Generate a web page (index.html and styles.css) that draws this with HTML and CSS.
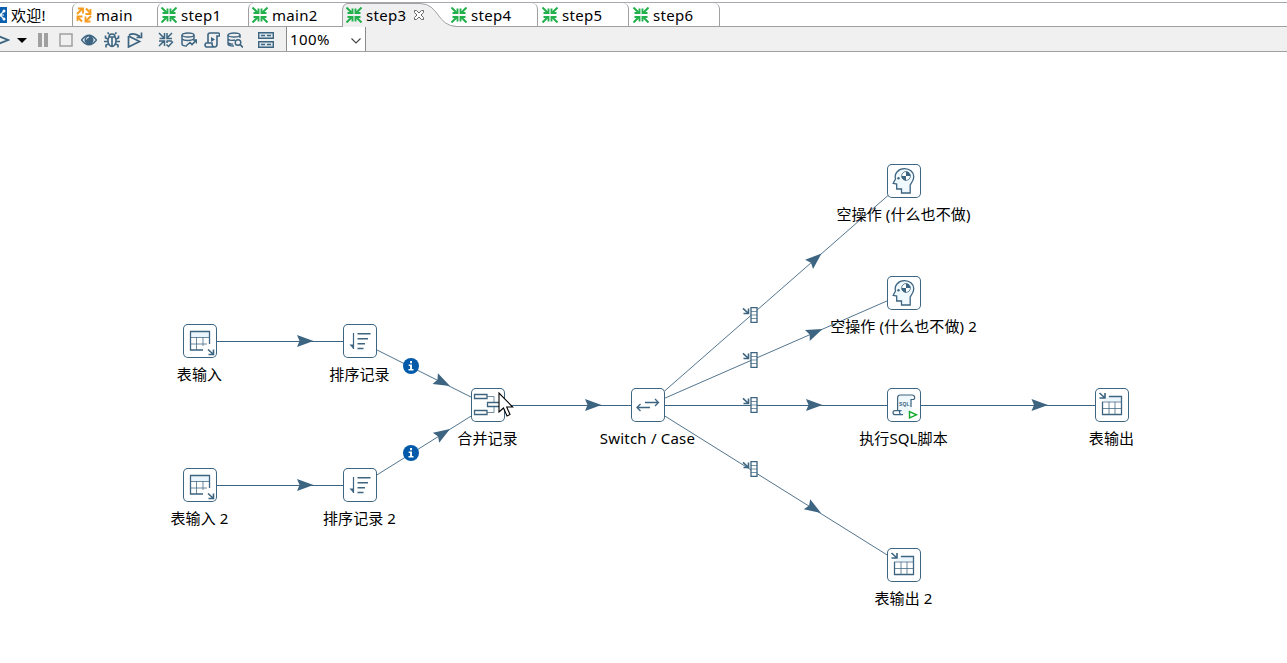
FILE: index.html
```html
<!DOCTYPE html>
<html lang="zh">
<head>
  <meta charset="UTF-8">
  <title>step3</title>
  <link rel="stylesheet" href="styles.css">
</head>
<body>
<svg class="defs" aria-hidden="true">
  <symbol id="transform" viewBox="0 0 16 16">
    <path d="M.5.5l5 5M15.500.5l-5 5M.5 15.500l5-5M15.500 15.500l-5-5" stroke-width="2"/>
    <path d="M1.500 6h5V1.500M14.500 6h-5V1.500M1.500 10h5v4.500M14.500 10h-5v4.500" stroke-width="1.900"/>
  </symbol>
  <symbol id="job" viewBox="0 0 16 16">
    <path d="M1 7l5-5M10 1.500l4.500 4.500M15 9l-5 5M6 14.500L1.500 10" stroke-width="2"/>
    <path d="M2 1.500h5v5M14.500 2v5h-5M9.500 9.500v5h5M1.500 14V9.500h5" stroke-width="1.800"/>
  </symbol>
  <symbol id="table-input" viewBox="0 0 34 34">
    <path d="M7.500 7.500h19v6h-19z" fill="#eaf6fc" stroke="none"/>
    <path d="M13.500 13v13M20 13v9M7 20h17M7 13.500h19" stroke-width="1" opacity=".75"/>
    <path d="M26.500 20V7.500h-19v18.500H20" stroke-width="1.300"/>
    <path d="M25 25.500l5 4.500M30.500 25.500v5h-5" stroke-width="1.600"/>
  </symbol>
  <symbol id="table-output" viewBox="0 0 34 34">
    <path d="M8 13.500l5.500-5.500h13v5.500z" fill="#eaf6fc" stroke="none"/>
    <path d="M14 14v12M20 14v12M7 20.500h19M7 14h19" stroke-width="1" opacity=".75"/>
    <path d="M14 8.500h12.500v18h-19V14" stroke-width="1.300"/>
    <path d="M4.500 5l5 4.500M10 5v5H4.500" stroke-width="1.600"/>
  </symbol>
  <symbol id="sort" viewBox="0 0 34 34">
    <path d="M10.500 9v16" stroke-width="1.200"/>
    <path d="M6.500 20.500h4V25z" fill="#3d6480" stroke="none"/>
    <path d="M14.500 9.700h13M14.500 14.700h10.500M14.500 19.700h7.500M14.500 24.500h6" stroke-width="1.400"/>
  </symbol>
  <symbol id="merge" viewBox="0 0 34 34">
    <path d="M16 8.500h7v16h-7" stroke-width="1" opacity=".7"/>
    <path d="M3.500 6.500h12.500v4H3.500zM3.500 22.500h12.500v4H3.500zM16.500 14.500h13v4h-13z" stroke-width="1.300" fill="#fff"/>
  </symbol>
  <symbol id="switch" viewBox="0 0 34 34">
    <path d="M14 14.500h13M24 11l3.500 3.500L24 18M19 19.500H6.500M9.500 16L6 19.500 9.500 23" stroke-width="1.300"/>
  </symbol>
  <symbol id="dummy" viewBox="0 0 34 34">
    <path d="M14.500 29v-4H9.700v-5l-3.500-.7L8.500 15C7 9.500 11.500 4.700 17.500 4.700c5.500 0 9.300 3.600 9.300 8 0 3.700-1.500 5.300-3.600 8.300v8z" fill="#eef8fd" stroke-width="1.300"/>
    <circle cx="19" cy="12" r="4.400" fill="#fff" stroke-width=".8"/>
    <path d="M19 12V7.600A4.400 4.400 0 0 1 23.400 12zM19 12v4.400A4.400 4.400 0 0 1 14.600 12z" fill="#3d6480" stroke="none"/>
    <circle cx="11.500" cy="14.300" r="1.200" fill="#3d6480" stroke="none"/>
  </symbol>
  <symbol id="sql" viewBox="0 0 34 34">
    <path d="M11 24V10c0-2 1-3 2.500-3H25v14l-4 5h-8z" fill="#eef8fd" stroke="none"/>
    <path d="M10.600 22.500V10c0-2 1-3 2.600-3H25c3.400 0 3.400 4.500 1 4.500h-2v7.500M14.500 22.700H8c-2.600 0-2.600 4 0 4h8M13 22.700c-1 1.300-.5 3 1 4" stroke-width="1.200"/>
    <text x="12" y="18" class="sql-text">SQL</text>
    <path d="M22.500 23.500v6.500l7-3.200z" fill="#fff" stroke="#12a92a" stroke-width="1.400"/>
  </symbol>
  <symbol id="arrow" viewBox="-16 -6 16 12" overflow="visible">
    <path d="M0 0L-16.500-6-14 0-16.500 6z" fill="#3d6480" stroke="none"/>
  </symbol>
  <symbol id="case" viewBox="0 0 16 16">
    <path d="M9 .7h6v14.600H9z" fill="#fff" stroke-width="1.300"/>
    <path d="M9 4.500h6M9 8h6M9 11.500h6" stroke-width="1" opacity=".7"/>
    <path d="M1 1.300l5 4.700M6.500 1.500v5H1.500" stroke-width="1.600"/>
  </symbol>
  <symbol id="info" viewBox="-8 -8 16 16">
    <circle r="8" fill="#005aa9" stroke="none"/>
    <path d="M-.9-5H1v2.200H-.9zM-2.300-1.600H1V3h1.500v1.600h-5V3h1.600V-.1h-1.400z" fill="#fff" stroke="none"/>
  </symbol>
</svg>

<nav class="tabs">
  <div class="tab welcome">
    <svg class="welcome-icon" viewBox="0 0 16 16"><path d="M0 0h16v16H0z" fill="#0a5fae"/><path d="M9 8l4-4M9 8h4M9 8l4 4" stroke="#fff" stroke-width="1.200"/><circle cx="13" cy="4" r="1.500" fill="#fff"/><circle cx="9" cy="8" r="1.500" fill="#fff"/><circle cx="13" cy="12" r="1.500" fill="#fff"/></svg>
    <span>欢迎!</span>
  </div>
  <div class="tab left main"><svg class="icon orange"><use href="#job"/></svg><span>main</span></div>
  <div class="tab left"><svg class="icon green"><use href="#transform"/></svg><span>step1</span></div>
  <div class="tab left main2"><svg class="icon green"><use href="#transform"/></svg><span>main2</span></div>
  <div class="tab active">
    <svg class="shape" viewBox="0 0 115 24"><path d="M.500 24V7Q1 .500 6 .500H78C97 .500 95 23.500 115 23.500V24z" fill="#f0f0f0"/><path d="M.500 24V7Q1 .500 6 .500H78C97 .500 95 23.500 115 23.500" stroke="#a0a0a0"/></svg>
    <svg class="icon green"><use href="#transform"/></svg><span>step3</span>
    <svg class="close" viewBox="0 0 12 12"><path d="M1.500 1.500h2L6 4l2.500-2.500h2v2L8 6l2.500 2.500v2h-2L6 8l-2.500 2.500h-2v-2L4 6 1.500 3.500z" fill="#fff" stroke="#666"/></svg>
  </div>
  <div class="tab right"><svg class="icon green"><use href="#transform"/></svg><span>step4</span></div>
  <div class="tab right"><svg class="icon green"><use href="#transform"/></svg><span>step5</span></div>
  <div class="tab right"><svg class="icon green"><use href="#transform"/></svg><span>step6</span></div>
</nav>

<div class="toolbar">
  <svg class="tool run" viewBox="0 0 16 16"><path d="M2 3l12 5-12 5z" stroke-width="1.800"/></svg>
  <svg class="caret" viewBox="0 0 10 5"><path d="M0 0h10L5 5z" fill="#000" stroke="none"/></svg>
  <svg class="tool" viewBox="0 0 16 16"><path d="M3 1h4v14H3zM9 1h4v14H9z" fill="#a0a0a0" stroke="none"/></svg>
  <svg class="tool" viewBox="0 0 16 16"><path d="M2 2h12v12H2z" stroke="#a0a0a0" stroke-width="1.500"/></svg>
  <svg class="tool" viewBox="0 0 16 16"><path d="M.500 8Q8-1.500 15.500 8 8 17.500.500 8z" stroke-width="1.300" fill="#dbe6ec"/><circle cx="8" cy="8" r="4.500" fill="#3d6480" stroke="none"/><path d="M5.500 7.500A2.500 2.500 0 0 1 8 5" stroke="#fff"/></svg>
  <svg class="tool" viewBox="0 0 16 16"><path d="M5 5h6q1 1 1 4c0 3-2 5.500-4 5.500S4 12 4 9q0-3 1-4zM8 5v9.500M5 5q0-3 3-3t3 3M5 2L3.500.500M11 2l1.500-1.500M4 7L1.500 6V3.500M12 7l2.500-1V3.500M4 9.500H0M12 9.500h4M4.500 12L2 13v2.500M11.500 12l2.500 1v2.500" stroke-width="1.600"/></svg>
  <svg class="tool" viewBox="0 0 16 16"><path d="M1.500 4v11l11-5.500L1.500 4M2 3q5-3 11 1.500M14.500.500v5h-5" stroke-width="1.700"/></svg>
  <svg class="tool check" viewBox="0 0 16 16"><path d="M1 1l5 5M14 1L9 6M1 14l5-5M1.500 6.500h5V1M14 6.500H9V1M1 9h5.500v5M8.500 9H14M9 9v2" stroke-width="1.500"/><path d="M8.500 12.500l2 2L15 9.500" stroke-width="1.500"/></svg>
  <svg class="tool" viewBox="0 0 16 16"><path d="M1 3v9c0 1.500 2 2 5 2M13 3v4M1 7c2 2 9 2 12 0" stroke-width="1.500"/><ellipse cx="7" cy="3" rx="6" ry="2" stroke-width="1.300"/><path d="M5.500 13.500l3.500-3 2 2 4-4M12 8h3.500v3.500" stroke-width="1.600"/></svg>
  <svg class="tool" viewBox="0 0 16 16"><path d="M4 11V3q0-2 2-2h8q2 0 1.500 3H13v8q0 3-2.500 3H2q-2-2 0-4h6q0 4 2.500 4" stroke-width="1.600"/><path d="M7 5v5l4-2.500z" fill="#3d6480" stroke="none"/></svg>
  <svg class="tool" viewBox="0 0 16 16"><path d="M1 3v9c0 1.500 2 2 6 2M13 3v3M1 7c1.500 1.500 5 1.500 7 1M1 11q3 1.500 5 1" stroke-width="1.400"/><ellipse cx="7" cy="3" rx="6" ry="2" stroke-width="1.300"/><circle cx="11" cy="10.500" r="2.800" stroke-width="1.400"/><path d="M13 12.500l3 3" stroke-width="1.700"/></svg>
  <svg class="tool results" viewBox="0 0 16 16"><path d="M.700.700h14.600v5.600H.700zM.700 9.700h14.600v5.600H.700z" fill="#dbe6ec" stroke-width="1.400"/><path d="M3 3.500h4M9 3.500h4M3 12.500h4M9 12.500h4" stroke-width="1.400"/></svg>
  <div class="zoom"><span>100%</span><svg viewBox="0 0 10 6"><path d="M.500.500L5 5 9.500.500" stroke="#444" stroke-width="1.100"/></svg></div>
</div>

<main class="canvas">
  <svg class="hops" viewBox="0 52 1287 611">
    <path d="M200 341.500H360M200 485.500H360M488 405.500H648M648 405.500H904M904 405.500H1112"/>
    <path d="M360 341.500L488 405.500M360 485.500L488 405.500M648 405.500L904 181.500M648 405.500L904 293.500M648 405.500L904 565.500" stroke-width=".9"/>
    <g>
      <use href="#arrow" x="-16" y="-6" width="16" height="12" transform="translate(313.500 341)"/>
      <use href="#arrow" x="-16" y="-6" width="16" height="12" transform="translate(313.500 485)"/>
      <use href="#arrow" x="-16" y="-6" width="16" height="12" transform="translate(450 386) rotate(26.600)"/>
      <use href="#arrow" x="-16" y="-6" width="16" height="12" transform="translate(450 429) rotate(-32)"/>
      <use href="#arrow" x="-16" y="-6" width="16" height="12" transform="translate(601.500 405)"/>
      <use href="#arrow" x="-16" y="-6" width="16" height="12" transform="translate(821.500 253.500) rotate(-41.200)"/>
      <use href="#arrow" x="-16" y="-6" width="16" height="12" transform="translate(822.500 329) rotate(-23.600)"/>
      <use href="#arrow" x="-16" y="-6" width="16" height="12" transform="translate(822.500 405)"/>
      <use href="#arrow" x="-16" y="-6" width="16" height="12" transform="translate(1048 405)"/>
      <use href="#arrow" x="-16" y="-6" width="16" height="12" transform="translate(821 513) rotate(32)"/>
    </g>
    <use href="#info" x="403" y="358" width="16" height="16"/>
    <use href="#info" x="403" y="445" width="16" height="16"/>
    <use href="#case" x="742" y="307" width="16" height="16"/>
    <use href="#case" x="742" y="352" width="16" height="16"/>
    <use href="#case" x="742" y="397" width="16" height="16"/>
    <use href="#case" x="742" y="461" width="16" height="16"/>
  </svg>

  <div class="node input-1"><svg><use href="#table-input"/></svg><span>表输入</span></div>
  <div class="node input-2"><svg><use href="#table-input"/></svg><span>表输入 2</span></div>
  <div class="node sort-1"><svg><use href="#sort"/></svg><span>排序记录</span></div>
  <div class="node sort-2"><svg><use href="#sort"/></svg><span>排序记录 2</span></div>
  <div class="node merge"><svg><use href="#merge"/></svg><span>合并记录</span></div>
  <div class="node switch"><svg><use href="#switch"/></svg><span>Switch / Case</span></div>
  <div class="node dummy-1"><svg><use href="#dummy"/></svg><span>空操作 (什么也不做)</span></div>
  <div class="node dummy-2"><svg><use href="#dummy"/></svg><span>空操作 (什么也不做) 2</span></div>
  <div class="node script"><svg><use href="#sql"/></svg><span>执行SQL脚本</span></div>
  <div class="node output-1"><svg><use href="#table-output"/></svg><span>表输出</span></div>
  <div class="node output-2"><svg><use href="#table-output"/></svg><span>表输出 2</span></div>

  <svg class="cursor" viewBox="0 0 16 25"><path d="M1 1v19l4.500-4 3.500 8 3-1.500L8.700 15h6z" fill="#fff" stroke="#000" stroke-width="1.100"/></svg>
</main>
</body>
</html>
```
FILE: styles.css
```css
body {
  margin: 0;
  height: 663px;
  overflow: hidden;
  display: flex;
  flex-direction: column;
  background: #fff;
  color: #000;
  font-family: 'Noto Sans', 'Noto Sans CJK SC', sans-serif;
  font-size: 15px;
  letter-spacing: .1px;
}

svg {
  display: block;
  flex: none;
  fill: none;
  stroke: #3d6480;
}

.defs {
  display: none;
}

/* tabs */

.tabs {
  display: flex;
  height: 23px;
  border-top: 1px solid #a9a6ad;
  border-bottom: 1px solid #a0a0a0;
  margin-top: 2px;
  flex: none;
}

.tab {
  position: relative;
  box-sizing: border-box;
  display: flex;
  align-items: center;
  width: 91px;
  height: 23px;
  padding: 1px 0 0 4px;
  line-height: 20px;
  white-space: nowrap;
}

.tab span {
  position: relative;
  margin-left: 4px;
  letter-spacing: .3px;
}

.left {
  border-left: 1px solid #a0a0a0;
  border-top-left-radius: 6px;
  padding-left: 3px;
}

.right {
  border-right: 1px solid #a0a0a0;
  border-top-right-radius: 6px;
}

.welcome {
  width: 72px;
  padding-left: 0;
}

.welcome-icon {
  width: 16px;
  height: 16px;
  margin-left: -9px;
  stroke: none;
}

.main {
  width: 85px;
}

.main2 {
  width: 94px;
}

.active {
  width: 105px;
}

.shape {
  position: absolute;
  left: 0;
  top: 0;
  width: 115px;
  height: 24px;
  stroke: none;
}

.icon {
  position: relative;
  width: 16px;
  height: 16px;
}

.green {
  stroke: #21b04b;
}

.orange {
  stroke: #f59b1e;
}

.close {
  position: relative;
  width: 12px;
  height: 12px;
  margin-left: 7px;
}

/* toolbar */

.toolbar {
  display: flex;
  align-items: center;
  gap: 7px;
  height: 24px;
  background: #f0f0f0;
  border-bottom: 1px solid #a0a0a0;
  flex: none;
}

.tool {
  width: 16px;
  height: 16px;
  margin-top: 2px;
}

.run {
  margin-left: -6px;
}

.caret {
  width: 10px;
  height: 5px;
  margin: 3px 1px 0 0;
}

.check,
.results {
  margin-left: 8px;
}

.zoom {
  box-sizing: border-box;
  display: flex;
  align-items: center;
  justify-content: space-between;
  width: 80px;
  height: 24px;
  margin-left: 5px;
  padding: 0 4px 0 3px;
  background: #fff;
  border-left: 1px solid #8a8a8a;
  border-right: 1px solid #8a8a8a;
  letter-spacing: .4px;
}

.zoom svg {
  width: 10px;
  height: 6px;
  margin-top: 3px;
}

/* canvas */

.canvas {
  position: relative;
  flex: 1;
}

.hops {
  width: 1287px;
  height: 611px;
}

.node {
  position: absolute;
  display: flex;
  flex-direction: column;
  align-items: center;
  width: 34px;
}

.node svg {
  box-sizing: border-box;
  width: 34px;
  height: 34px;
  background: #fff;
  border-radius: 5px;
  box-shadow: inset 0 0 0 1px #3d6480;
}

.node span {
  margin-top: 5px;
  margin-right: 1px;
  line-height: 22px;
  white-space: nowrap;
}

.switch span {
  letter-spacing: .2px;
}

.sql-text {
  font: bold 5px 'Liberation Sans', sans-serif;
  fill: #3d6480;
  stroke: none;
}

.input-1 { left: 183px; top: 272px; }
.input-2 { left: 183px; top: 416px; }
.sort-1 { left: 343px; top: 272px; }
.sort-2 { left: 343px; top: 416px; }
.merge { left: 471px; top: 336px; }
.switch { left: 631px; top: 336px; }
.dummy-1 { left: 887px; top: 112px; }
.dummy-2 { left: 887px; top: 224px; }
.script { left: 887px; top: 336px; }
.output-1 { left: 1095px; top: 336px; }
.output-2 { left: 887px; top: 496px; }

.cursor {
  position: absolute;
  left: 498px;
  top: 340px;
  width: 16px;
  height: 25px;
}
```
